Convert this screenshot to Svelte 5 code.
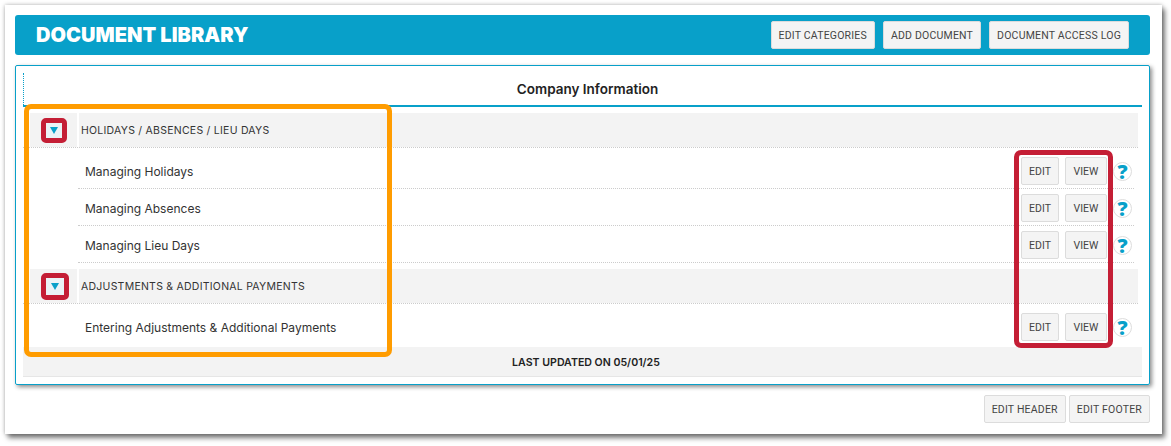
<script>
  const groups = [
    {
      name: "HOLIDAYS / ABSENCES / LIEU DAYS",
      docs: ["Managing Holidays", "Managing Absences", "Managing Lieu Days"],
    },
    {
      name: "ADJUSTMENTS & ADDITIONAL PAYMENTS",
      docs: ["Entering Adjustments & Additional Payments"],
    },
  ];
</script>

<div class="page">
  <div class="sheet">
    <header class="bar">
      <h1>DOCUMENT LIBRARY</h1>
      <div class="bar-actions">
        <button class="btn">EDIT CATEGORIES</button>
        <button class="btn">ADD DOCUMENT</button>
        <button class="btn">DOCUMENT ACCESS LOG</button>
      </div>
    </header>

    <section class="card">
      <div class="tab-head">
        <span>Company Information</span>
      </div>

      {#each groups as g, i}
        <div class="group" class:later={i > 0}>
          <div class="toggle-cell">
            <span class="toggle"><span class="arrow"></span></span>
          </div>
          <div class="group-name">{g.name}</div>
        </div>
        {#each g.docs as doc, j}
          <div class="doc" class:first={j === 0} class:last={j === g.docs.length - 1}>
            <span class="doc-name">{doc}</span>
            <div class="doc-actions">
              <button class="btn small edit">EDIT</button>
              <button class="btn small view">VIEW</button>
              <span class="help">?</span>
            </div>
          </div>
        {/each}
      {/each}

      <div class="updated">LAST UPDATED ON 05/01/25</div>

      <!-- annotations drawn over the screenshot -->
      <div class="mark orange"></div>
      <div class="mark red"></div>
    </section>

    <footer class="foot">
      <button class="btn">EDIT HEADER</button>
      <button class="btn">EDIT FOOTER</button>
    </footer>
  </div>
</div>

<style>
  :global(body) {
    margin: 0;
    background: #fff;
  }

  .page {
    box-sizing: border-box;
    height: 446px;
    padding: 5px 0 0 5px;
    overflow: hidden;
  }

  .sheet {
    box-sizing: border-box;
    width: 1157px;
    height: 429px;
    padding: 10px 12px 0 10px;
    background: #fff;
    box-shadow: 0 0 4px rgba(0, 0, 0, 0.3), 3px 4px 5px rgba(0, 0, 0, 0.5);
    font-family: Inter, sans-serif;
    color: #2b2b33;
  }

  .bar {
    display: flex;
    justify-content: space-between;
    align-items: center;
    height: 40px;
    padding: 0 21px;
    background: #08a0c9;
    border-radius: 3px;
  }

  h1 {
    margin: 0;
    font-size: 20px;
    font-weight: 900;
    letter-spacing: 0.05px;
    color: #fff;
  }

  .bar-actions {
    display: flex;
    gap: 8px;
  }

  .btn {
    box-sizing: border-box;
    height: 28px;
    padding: 0 7px;
    background: #f4f4f4;
    border: 1px solid #dcdcdc;
    border-radius: 2px;
    font-family: Roboto, sans-serif;
    font-size: 10.5px;
    letter-spacing: 0.2px;
    color: #444;
  }

  .small {
    padding: 0;
    letter-spacing: 0;
  }

  .edit {
    width: 38px;
  }

  .view {
    width: 42px;
  }

  .card {
    position: relative;
    box-sizing: border-box;
    height: 320px;
    margin-top: 10px;
    padding: 0 7px;
    border: 1px solid #08a0c9;
    border-radius: 2px;
    box-shadow: 2px 2px 4px rgba(0, 0, 0, 0.45);
  }

  .tab-head {
    box-sizing: border-box;
    display: flex;
    align-items: center;
    justify-content: center;
    height: 41px;
    margin-bottom: 6px;
    padding: 7px 0 0 10px;
    border-bottom: 2px solid #08a0c9;
    font-size: 13.5px;
    font-weight: 600;
    color: #222;
  }

  .tab-head::before {
    content: "";
    position: absolute;
    left: 7px;
    top: 7px;
    height: 32px;
    border-left: 1px dotted #08a0c9;
  }

  .group {
    box-sizing: border-box;
    display: flex;
    gap: 2px;
    height: 35px;
    margin-right: 4px;
    border-bottom: 1px dotted #ccc;
  }

  .group.later {
    margin-top: 6px;
  }

  .toggle-cell {
    box-sizing: border-box;
    display: flex;
    align-items: center;
    justify-content: center;
    width: 47px;
    margin-left: 7px;
    background: #f3f3f3;
  }

  .toggle {
    box-sizing: border-box;
    display: flex;
    align-items: center;
    justify-content: center;
    width: 26px;
    height: 25px;
    border: 5px solid #c41e35;
    border-radius: 5px;
    background: #eaf3f6;
  }

  .later .toggle {
    width: 28px;
    height: 27px;
    margin-left: 2px;
  }

  .arrow {
    width: 0;
    height: 0;
    margin-top: 1px;
    border-left: 4px solid transparent;
    border-right: 4px solid transparent;
    border-top: 7px solid #08a0c9;
  }

  .group-name {
    flex: 1;
    display: flex;
    align-items: center;
    padding-left: 2px;
    background: #f3f3f3;
    font-size: 10.5px;
    letter-spacing: 0.25px;
    color: #333;
  }

  .doc {
    box-sizing: border-box;
    display: flex;
    justify-content: space-between;
    align-items: flex-start;
    height: 37px;
    margin-left: 55px;
    margin-right: 8px;
    padding: 5px 0 0 7px;
    border-bottom: 1px dotted #ccc;
    font-size: 12px;
    color: #333;
  }

  .doc.first {
    height: 41px;
    padding-top: 9px;
  }

  .doc.first.last {
    height: 43px;
    border-bottom: 0;
  }

  .doc-name {
    line-height: 30px;
  }

  .doc-actions {
    display: flex;
    align-items: center;
    gap: 6px;
  }

  .help {
    box-sizing: border-box;
    display: flex;
    align-items: center;
    justify-content: center;
    width: 19px;
    height: 19px;
    margin-right: 2px;
    border: 1px solid #ddd;
    border-radius: 50%;
    font-family: "Open Sans", sans-serif;
    font-size: 20px;
    font-weight: 800;
    color: #08a0c9;
  }

  .updated {
    box-sizing: border-box;
    display: flex;
    align-items: center;
    justify-content: center;
    height: 30px;
    padding: 1px 0 0 7px;
    background: #f3f3f3;
    border-bottom: 1px solid #e6e6e6;
    font-size: 10.6px;
    font-weight: 600;
    color: #222;
  }

  .mark {
    position: absolute;
    box-sizing: border-box;
    pointer-events: none;
  }

  .orange {
    left: 8px;
    top: 38px;
    width: 368px;
    height: 253px;
    border: 5px solid #ff9c00;
    border-radius: 7px;
  }

  .red {
    left: 998px;
    top: 84px;
    width: 99px;
    height: 198px;
    border: 5px solid #c41e35;
    border-radius: 7px;
  }

  .foot {
    display: flex;
    justify-content: flex-end;
    gap: 3px;
    margin-top: 10px;
  }
</style>
